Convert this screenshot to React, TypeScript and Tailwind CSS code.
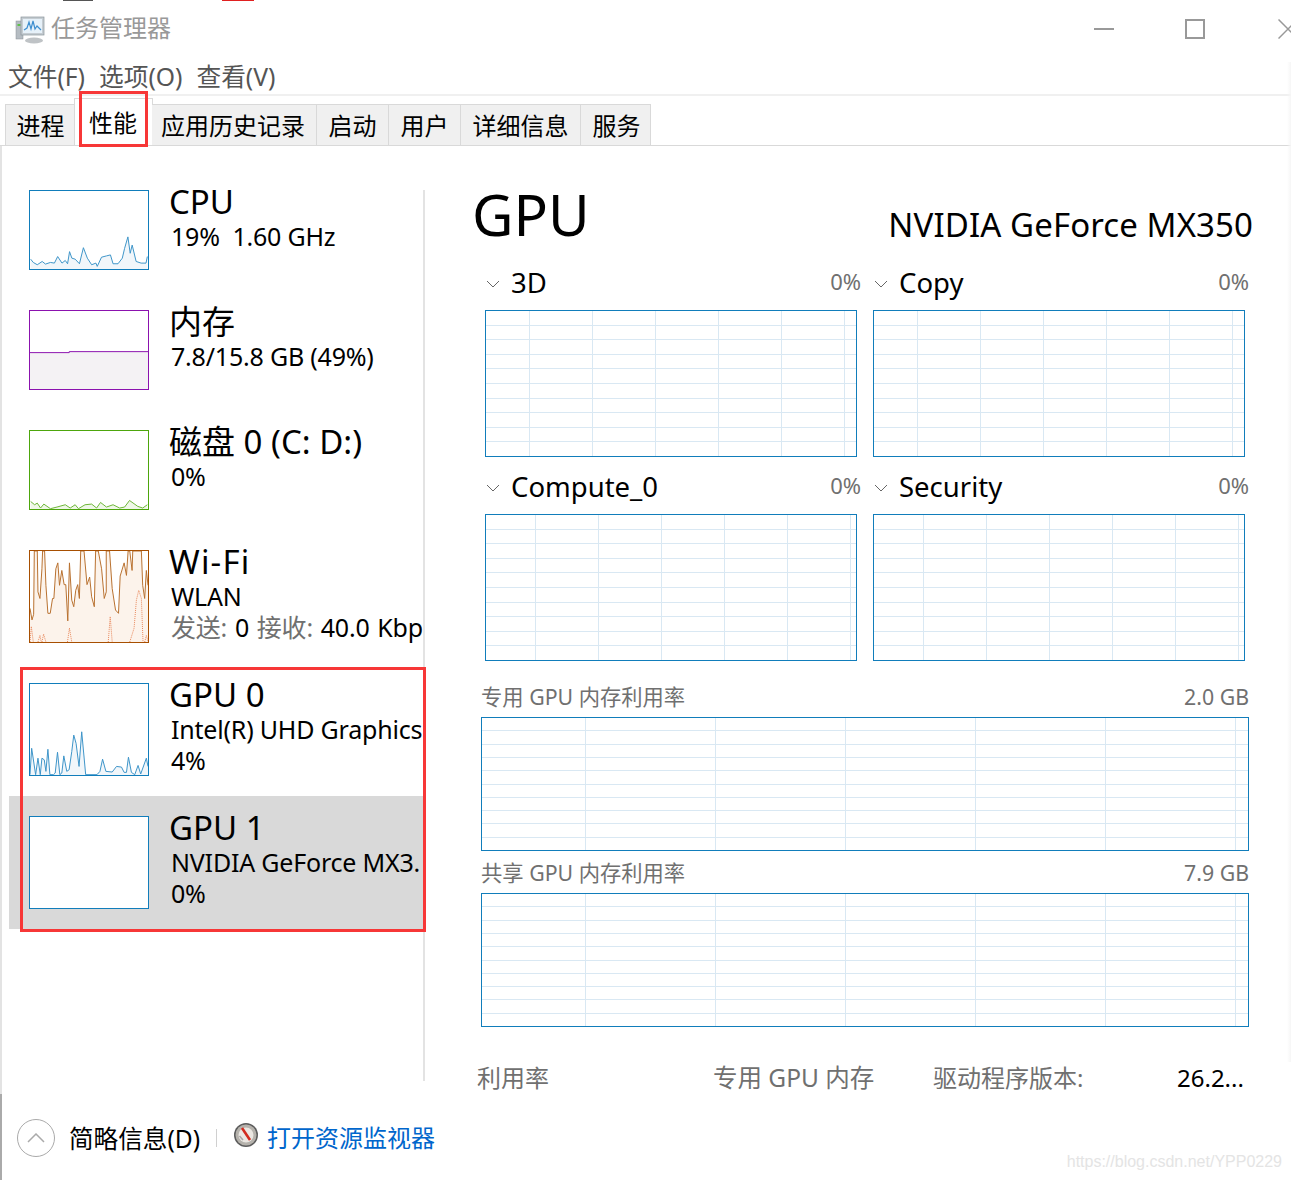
import React from 'react';

const FONT = "font-['Noto_Sans','Noto_Sans_CJK_SC',sans-serif]";

const TABS = [
  { label: '进程', w: 'w-[70px]', nudge: 'ml-[1px]' },
  { label: '性能', w: 'w-[79px]', active: true },
  { label: '应用历史记录', w: 'w-[165px]', nudge: 'mr-[2px]' },
  { label: '启动', w: 'w-[72px]' },
  { label: '用户', w: 'w-[72px]' },
  { label: '详细信息', w: 'w-[120px]' },
  { label: '服务', w: 'w-[70px]', nudge: 'ml-[2px]' },
];

const CPU_LINE =
  '60,268 68,278 80,285 95,275 105,283 120,278 132,280 142,260 155,280 165,272 172,282 178,245 185,265 195,268 208,282 220,233 232,265 245,285 258,280 262,290 275,262 290,258 302,255 310,282 325,282 338,265 345,235 355,200 362,250 368,225 380,275 395,280 410,280 414,260';
const DISK_LINE =
  '60,995 72,1005 80,1000 90,1015 100,1003 120,1017 140,1012 165,1005 180,1015 195,1005 205,1017 225,1005 245,1003 260,1015 272,998 290,1012 310,1005 330,1015 345,1012 360,992 385,1010 400,1015 414,1005';
const WIFI_LINE =
  '14,190 20,225 25,208 27,16 36,16 38,140 44,160 50,70 52,16 58,16 62,120 68,205 75,205 82,160 86,160 92,70 98,52 103,120 110,75 117,118 122,118 128,228 133,52 140,165 146,185 152,135 158,118 163,160 167,16 177,16 186,118 194,95 200,155 208,185 212,16 220,16 230,70 238,160 244,140 244,16 254,16 262,130 272,195 281,205 286,92 298,52 305,90 310,16 315,16 322,75 324,16 350,16 354,120 360,160 365,75 370,120';
const WIFI_DOTS = [
  '14,292 18,245 24,292',
  '38,292 44,272 48,292',
  '50,292 55,268 62,292',
  '127,292 133,250 140,292',
  '250,292 256,215 262,292',
  '315,292 328,250 335,165 342,135 350,160 355,292',
  '360,292 365,272 370,290',
];
const GPU0_LINE =
  '14,165 19,85 31,165 38,115 45,165 50,115 57,120 62,155 68,88 74,165 85,165 90,160 97,97 104,165 110,160 116,108 125,155 132,150 140,95 146,45 153,70 162,140 170,35 182,165 216,165 225,155 233,118 243,155 262,157 275,140 290,142 298,158 305,158 311,112 320,158 330,165 340,137 348,163 365,115 370,140';

function Spark({ box, line, bottom, color, fill, dots }: { box: string; line: string; bottom: number; color: string; fill: string; dots?: string[] }) {
  const pts = line.split(' ');
  const first = pts[0].split(',')[0];
  const last = pts[pts.length - 1].split(',')[0];
  return (
    <svg viewBox={box} preserveAspectRatio="none" className="block h-full w-full">
      <polygon points={`${first},${bottom} ${line} ${last},${bottom}`} fill={fill} />
      <polyline points={line} fill="none" stroke={color} strokeWidth="3" />
      {dots?.map((d) => (
        <polyline key={d} points={d} fill="none" stroke="#e8875a" strokeWidth="3" strokeDasharray="3 3" />
      ))}
    </svg>
  );
}

const ROWS = [
  {
    title: 'CPU',
    lines: [{ text: '19%  1.60 GHz' }],
    thumbH: 'h-[80px]',
    border: 'border-[#117dbb]',
    chart: <Spark box="58 60 358 238" line={CPU_LINE} bottom={298} color="#3d94c8" fill="#f1f6fa" />,
  },
  {
    title: '内存',
    lines: [{ text: '7.8/15.8 GB (49%)' }],
    thumbH: 'h-[80px]',
    border: 'border-[#8b12ae]',
    chart: <Spark box="58 420 358 238" line="58,547 177,547 177,544 416,544" bottom={658} color="#8b12ae" fill="#f4f2f4" />,
  },
  {
    title: '磁盘 0 (C: D:)',
    lines: [{ text: '0%' }],
    thumbH: 'h-[80px]',
    border: 'border-[#4da60c]',
    chart: <Spark box="58 780 358 238" line={DISK_LINE} bottom={1018} color="#6cb536" fill="#eff7e8" />,
  },
  {
    title: 'Wi-Fi',
    lines: [{ text: 'WLAN' }, { text: '0', prefix: '发送: ', mid: ' 接收: ', rest: '40.0 Kbps' }],
    thumbH: 'h-[93px]',
    border: 'border-[#a74f01]',
    chart: <Spark box="14 16 356 276" line={WIFI_LINE} bottom={292} color="#b8702f" fill="#fcf3eb" dots={WIFI_DOTS} />,
  },
  {
    title: 'GPU 0',
    lines: [{ text: 'Intel(R) UHD Graphics' }, { text: '4%' }],
    thumbH: 'h-[93px]',
    border: 'border-[#117dbb]',
    chart: <Spark box="14 -110 356 276" line={GPU0_LINE} bottom={166} color="#3d94c8" fill="#f1f6fa" />,
  },
  {
    title: 'GPU 1',
    lines: [{ text: 'NVIDIA GeForce MX3.' }, { text: '0%' }],
    thumbH: 'h-[93px]',
    border: 'border-[#117dbb]',
    selected: true,
    chart: null,
  },
];

function GridChart({ w, h, x0, dx, dy }: { w: number; h: number; x0: number; dx: number; dy: number }) {
  const vs: number[] = [];
  for (let x = x0; x < w - 2; x += dx) vs.push(x);
  const hs: number[] = [];
  for (let y = dy; y < h - 4; y += dy) hs.push(Math.round(y) + 0.5);
  return (
    <div className="border border-[#117dbb] bg-white" style={{ width: w, height: h }}>
      <svg width={w - 2} height={h - 2} className="block">
        {hs.map((y) => (
          <line key={y} x1="0" x2={w} y1={y - 1} y2={y - 1} stroke="#d9e8f3" />
        ))}
        {vs.map((x) => (
          <line key={x} x1={x - 0.5} x2={x - 0.5} y1="0" y2={h} stroke="#d9e8f3" />
        ))}
      </svg>
    </div>
  );
}

function EngineChart({ name, x0 }: { name: string; x0: number }) {
  return (
    <div className="w-[372px]">
      <div className="flex h-[42px] items-start">
        <svg width="14" height="8" viewBox="0 0 14 8" className="mt-[12px] ml-[1px] shrink-0">
          <path d="M1 1l6 6 6-6" fill="none" stroke="#666" strokeWidth="1" />
        </svg>
        <span className="ml-[11px] text-[27.5px] leading-[29px] text-black">{name}</span>
        <span className="mr-[-4px] ml-auto text-[22px] leading-[26px] text-[#707070]">0%</span>
      </div>
      <GridChart w={372} h={147} x0={x0} dx={63} dy={14.6} />
    </div>
  );
}

function MemoryChart({ label, value }: { label: string; value: string }) {
  return (
    <div className="w-[768px]">
      <div className="flex h-[32px] items-start justify-between text-[21.3px] leading-[24px] text-[#707070]">
        <span>{label}</span>
        <span>{value}</span>
      </div>
      <GridChart w={768} h={134} x0={104} dx={130} dy={13.3} />
    </div>
  );
}

function TaskIcon() {
  return (
    <svg width="30" height="30" viewBox="0 0 30 30" className="shrink-0">
      <rect x="1" y="7" width="7" height="18" fill="#b5bcc2" stroke="#8a9096" strokeWidth="0.5" />
      <rect x="2.5" y="10" width="3" height="2" fill="#5ec04a" />
      <ellipse cx="19" cy="26.5" rx="9" ry="3" fill="#bfc3c6" />
      <rect x="6" y="3" width="23" height="18" fill="#c5ccd2" stroke="#8b949b" strokeWidth="0.7" />
      <rect x="8" y="5" width="19" height="14" fill="#e6f1f9" />
      <path d="M9 16l3-2 2-6 2 7 2-8 2 8 2-3 4 4" fill="none" stroke="#3e8fd0" strokeWidth="1.2" />
    </svg>
  );
}

function MonitorIcon() {
  return (
    <svg width="24" height="24" viewBox="0 0 24 24" className="shrink-0">
      <circle cx="12" cy="12" r="12" fill="#5c5c5c" />
      <circle cx="12" cy="12" r="10.5" fill="#b5b2ac" />
      <circle cx="12" cy="12" r="7.5" fill="#ebe7e2" />
      <path d="M8 5l8 12" stroke="#d22a1e" strokeWidth="2.6" />
      <path d="M5.5 13l3.5 4" stroke="#a5a5a5" strokeWidth="1.5" />
    </svg>
  );
}

export default function App() {
  return (
    <div className={`${FONT} relative flex h-[1180px] w-[1291px] flex-col overflow-hidden bg-white text-black`}>
      {/* clipped bits of whatever sat above the window */}
      <div className="absolute top-0 left-[63px] h-px w-[30px] bg-[#555]" />
      <div className="absolute top-0 left-[222px] h-px w-[32px] bg-[#e02020]" />

      {/* Title bar */}
      <div className="flex h-[57px] shrink-0 items-center pl-[15px]">
        <TaskIcon />
        <span className="-mt-[2px] ml-[6px] text-[24px] leading-[32px] text-[#999]">任务管理器</span>
        <div className="ml-auto flex items-center pt-[1px]">
          <div className="h-[2px] w-[20px] bg-[#999]" />
          <div className="ml-[71px] h-[20px] w-[20px] border-2 border-[#999]" />
          <svg width="20" height="20" viewBox="0 0 20 20" className="mr-[-7px] ml-[73px] shrink-0">
            <path d="M0.5 0.5l19 19M19.5 0.5l-19 19" stroke="#999" strokeWidth="1.5" />
          </svg>
        </div>
      </div>

      {/* Menu */}
      <div className="flex h-[39px] shrink-0 items-start gap-[14px] border-b-2 border-[#f0f0f0] pl-[8px] text-[24.7px] leading-[40px] text-[#555]">
        <span>文件(F)</span>
        <span>选项(O)</span>
        <span>查看(V)</span>
      </div>

      {/* Tabs */}
      <div className="flex h-[50px] shrink-0 items-end border-b border-[#d9d9d9] pl-[5px]">
        {TABS.map((t) =>
          t.active ? (
            <div
              key={t.label}
              className={`${t.w} -mx-[1px] flex h-[47px] items-start justify-center border border-b-0 border-[#d9d9d9] bg-white text-[24px] leading-[50px]`}
            >
              <span className="-mt-[1px] mr-[1px]">{t.label}</span>
            </div>
          ) : (
            <div
              key={t.label}
              className={`${t.w} flex h-[41px] items-center justify-center border border-b-0 border-l-0 border-[#d9d9d9] bg-[#f0f0f0] text-[24px] leading-[40px] first:border-l`}
            >
              <span className={`mt-[2px] ${t.nudge ?? ''}`}>{t.label}</span>
            </div>
          ),
        )}
      </div>

      {/* Main */}
      <div className="flex h-[948px] shrink-0 border-l-2 border-[#e3e3e3]">
        <div className="w-[421px] shrink-0 pt-[24px] pl-[7px]">
          {ROWS.map((r) => (
            <div key={r.title} className={`flex w-[415px] gap-[20px] overflow-hidden py-[20px] pl-[20px] ${r.selected ? 'bg-[#d9d9d9]' : ''}`}>
              <div className={`${r.thumbH} w-[120px] shrink-0 overflow-hidden border bg-white ${r.border}`}>{r.chart}</div>
              <div className="-mt-[7px] whitespace-pre">
                <div className={`text-[33px] leading-[37px] ${r.title === 'Wi-Fi' ? 'tracking-[1.2px]' : ''}`}>{r.title}</div>
                {r.lines.map((l) => (
                  <div key={l.text} className="mt-[1px] ml-[2px] text-[25px] leading-[30px] tracking-[-0.2px] first-of-type:mt-[2px]">
                    {l.prefix ? (
                      <span className="[word-spacing:1.5px]">
                        <span className="text-[#707070]">{l.prefix}</span>
                        {l.text}
                        <span className="text-[#707070]">{l.mid}</span>
                        {l.rest}
                      </span>
                    ) : (
                      l.text
                    )}
                  </div>
                ))}
              </div>
            </div>
          ))}
        </div>

        <div className="mt-[44px] mr-[1px] h-[891px] w-[2px] shrink-0 bg-[#e3e3e3]" />

        <div className="min-w-0 flex-1 pt-[33px]">
          <div className="flex h-[89px] items-start pr-[38px] pl-[46px]">
            <span className="text-[57px] leading-[70px]">GPU</span>
            <span className="mt-[22px] ml-auto text-[33px] leading-[48px] tracking-[0.1px]">NVIDIA GeForce MX350</span>
          </div>
          <div className="ml-[59px] grid w-[760px] grid-cols-2 gap-x-[16px] gap-y-[15px]">
            <EngineChart name="3D" x0={44} />
            <EngineChart name="Copy" x0={44} />
            <EngineChart name="Compute_0" x0={50} />
            <EngineChart name="Security" x0={50} />
          </div>
          <div className="mt-[24px] ml-[55px] flex flex-col gap-[10px]">
            <MemoryChart label="专用 GPU 内存利用率" value="2.0 GB" />
            <MemoryChart label="共享 GPU 内存利用率" value="7.9 GB" />
          </div>
          <div className="mt-[33px] ml-[51px] flex h-[36px] items-center text-[24px] text-[#707070]">
            <span className="w-[236px]">利用率</span>
            <span className="w-[220px] text-[24.5px]">专用 GPU 内存</span>
            <span className="w-[244px]">驱动程序版本:</span>
            <span className="text-[24px] text-black">26.2...</span>
          </div>
        </div>
      </div>

      {/* Footer */}
      <div className="flex flex-1 items-center border-l-2 border-[#aaa] pt-[2px] pl-[15px]">
        <div className="flex h-[38px] w-[38px] items-center justify-center rounded-full border border-[#aaa]">
          <svg width="18" height="10" viewBox="0 0 18 10">
            <path d="M1 9l8-8 8 8" fill="none" stroke="#aaa" strokeWidth="1.5" />
          </svg>
        </div>
        <span className="mt-[1px] ml-[14px] text-[24.6px] leading-[32px]">简略信息(D)</span>
        <div className="mr-[17px] ml-[16px] h-[18px] w-px bg-[#d0d0d0]" />
        <div className="-mt-[6px]">
          <MonitorIcon />
        </div>
        <span className="ml-[9px] text-[24px] leading-[32px] text-[#0066cc]">打开资源监视器</span>
      </div>

      {/* Red annotations drawn over the screenshot */}
      <div className="pointer-events-none absolute top-[91px] left-[79px] h-[56px] w-[69px] border-[3px] border-[#f73737]" />
      <div className="pointer-events-none absolute top-[667px] left-[20px] h-[265px] w-[406px] border-[3px] border-[#f73737]" />

      <div className="absolute right-0 top-[62px] h-[1000px] w-[4px] bg-gradient-to-r from-transparent to-[#f6f6f6]" />
      <div className="absolute right-[9px] bottom-[8px] font-['Liberation_Sans',sans-serif] text-[16px] leading-[20px] text-[#e4e4e4]">https://blog.csdn.net/YPP0229</div>
    </div>
  );
}
